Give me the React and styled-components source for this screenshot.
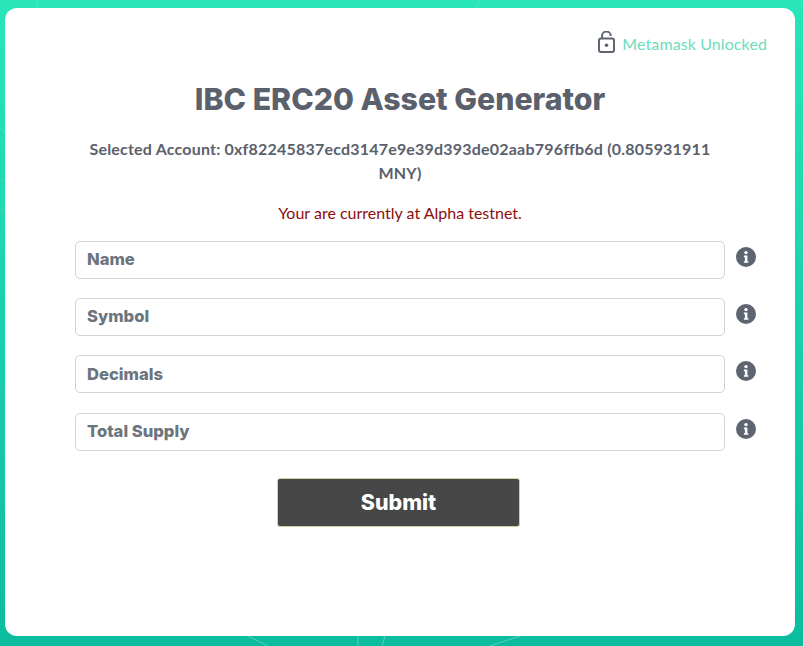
import React from 'react';
import styled, { createGlobalStyle } from 'styled-components';

const GlobalStyle = createGlobalStyle`
  html, body {
    margin: 0;
    height: 100%;
    background: #1fd2ad;
  }
  * {
    box-sizing: border-box;
  }
`;

const Page = styled.div`
  position: relative;
  width: 803px;
  height: 646px;
  padding: 8px 8px 10px 5px;
  overflow: hidden;
  background: linear-gradient(180deg, #2ae5b9 0%, #0cbc9f 100%);
  font-family: 'Lato', 'Open Sans', sans-serif;
`;

const Lines = styled.svg`
  position: absolute;
  inset: 0;
  width: 803px;
  height: 646px;
`;

const Card = styled.main`
  position: relative;
  height: 628px;
  padding: 24px 28px 0;
  background: #fff;
  border-radius: 12px;
`;

const Status = styled.div`
  display: flex;
  justify-content: flex-end;
  align-items: center;
  gap: 7px;
  height: 22px;
  color: #6edcbd;
  font-size: 16px;
  letter-spacing: 0.1px;
`;

const LockIcon = styled.svg`
  width: 17px;
  height: 22px;
  margin-bottom: 3px;
  color: #5e6470;
`;

const Title = styled.h1`
  margin: 22px 0 0;
  color: #5a606c;
  font-family: 'Inter', sans-serif;
  font-optical-sizing: none;
  font-size: 30.25px;
  font-weight: 800;
  line-height: 46px;
  text-align: center;
`;

const Content = styled.div`
  padding-left: 42px;
`;

const Account = styled.p`
  width: 650px;
  margin: 15px 0 0;
  color: #5a606c;
  font-size: 16px;
  font-weight: 700;
  letter-spacing: 0.2px;
  line-height: 24px;
  text-align: center;
`;

const Network = styled.p`
  width: 650px;
  margin: 16px 0 0;
  color: #8b0d0d;
  font-size: 16px;
  line-height: 24px;
  text-align: center;
`;

const Form = styled.form`
  display: flex;
  flex-direction: column;
  gap: 19.33px;
  margin-top: 15.6px;
`;

const Row = styled.div`
  display: flex;
  align-items: flex-start;
  gap: 11px;
`;

const Field = styled.input`
  width: 650px;
  height: 38px;
  padding: 0 11px 1px;
  border: 1px solid #ced4da;
  border-radius: 5px;
  outline: none;
  background: #fff;
  font-family: 'Inter', sans-serif;
  font-optical-sizing: none;
  font-size: 16.6px;
  font-weight: 800;

  &::placeholder {
    color: #6c757d;
    opacity: 1;
  }
`;

const InfoIcon = styled.svg`
  flex: none;
  width: 20px;
  height: 20px;
  margin-top: 6px;
  color: #5e6470;
`;

const Submit = styled.button`
  display: block;
  width: 243px;
  height: 49px;
  margin: 27.4px 0 0 202px;
  border: 1px solid #d0cfa4;
  border-radius: 3px;
  background: #474747;
  color: #fff;
  font-family: 'Inter', sans-serif;
  font-optical-sizing: none;
  font-size: 21.4px;
  font-weight: 800;
`;

const fields = ['Name', 'Symbol', 'Decimals', 'Total Supply'];

const App = () => (
  <>
    <GlobalStyle />
    <Page>
      <Lines viewBox="0 0 803 646" fill="none" stroke="#fff" strokeOpacity="0.14">
        <path d="M0 128 L5 133 M0 182 L5 179 M0 212 L5 207 M38 0 L36 8 M480 0 L476 8" />
        <path d="M248 636 L268 646 M358 636 L358 646 M385 636 L382 646 M520 636 L490 646" strokeOpacity="0.3" />
      </Lines>
      <Card>
        <Status>
          <LockIcon viewBox="0 0 17 22" fill="none" stroke="currentColor" strokeWidth="2">
            <rect x="1" y="7.5" width="15" height="13.5" rx="2" />
            <path d="M4 7.5V5a4.4 4.4 0 0 1 8.8 0" />
            <circle cx="8.5" cy="14.2" r="1.8" fill="currentColor" stroke="none" />
          </LockIcon>
          Metamask Unlocked
        </Status>
        <Title>IBC ERC20 Asset Generator</Title>
        <Content>
          <Account>
            Selected Account: 0xf82245837ecd3147e9e39d393de02aab796ffb6d (0.805931911 MNY)
          </Account>
          <Network>Your are currently at Alpha testnet.</Network>
          <Form onSubmit={(e) => e.preventDefault()}>
            {fields.map((field) => (
              <Row key={field}>
                <Field placeholder={field} />
                <InfoIcon viewBox="0 0 20 20">
                  <circle cx="10" cy="10" r="10" fill="currentColor" />
                  <circle cx="10" cy="5.6" r="1.7" fill="#fff" />
                  <path d="M7.9 8.6h3.5v5.6h1v1.6H7.9v-1.6h1v-4H7.9z" fill="#fff" />
                </InfoIcon>
              </Row>
            ))}
          </Form>
          <Submit type="button">Submit</Submit>
        </Content>
      </Card>
    </Page>
  </>
);

export default App;
